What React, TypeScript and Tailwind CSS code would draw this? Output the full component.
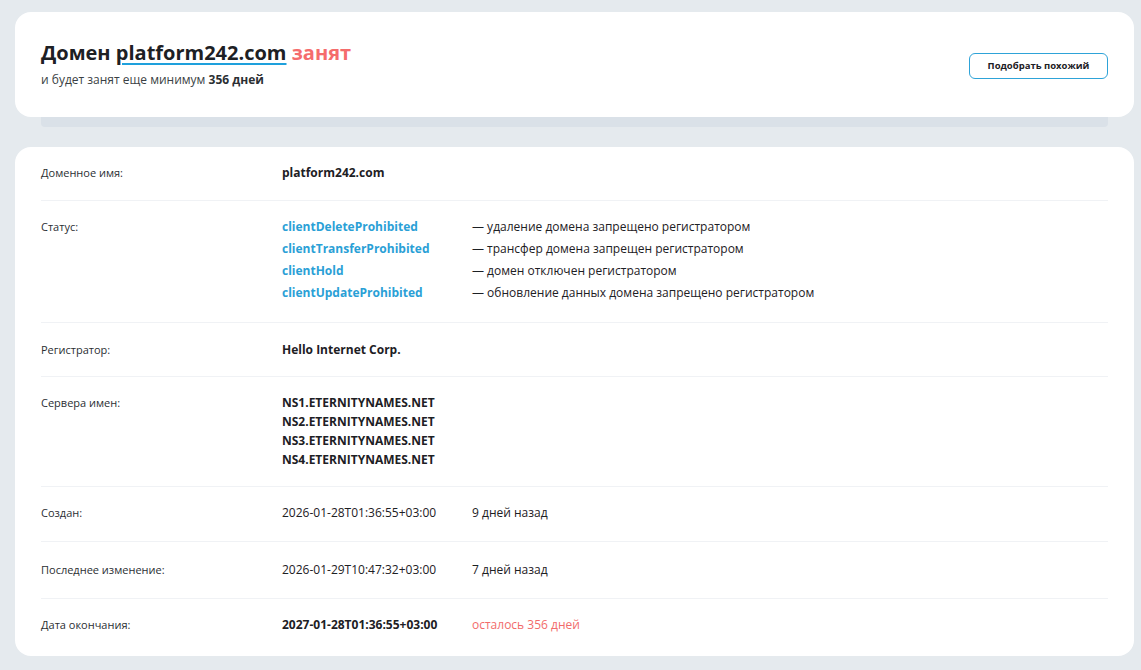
import type { ReactNode } from 'react'

const statuses = [
  { code: 'clientDeleteProhibited', text: '— удаление домена запрещено регистратором' },
  { code: 'clientTransferProhibited', text: '— трансфер домена запрещен регистратором' },
  { code: 'clientHold', text: '— домен отключен регистратором' },
  { code: 'clientUpdateProhibited', text: '— обновление данных домена запрещено регистратором' },
]

const nameservers = [
  'NS1.ETERNITYNAMES.NET',
  'NS2.ETERNITYNAMES.NET',
  'NS3.ETERNITYNAMES.NET',
  'NS4.ETERNITYNAMES.NET',
]

// One line of the whois table: label on the left, value block on the right
const Row = ({
  label,
  children,
  pad = 'pt-4 pb-[17px]',
  last,
}: {
  label: string
  children: ReactNode
  pad?: string
  last?: boolean
}) => (
  <div className={`flex ${pad} ${last ? '' : 'border-b border-[#f0f2f5]'}`}>
    <div className="w-[241px] shrink-0 text-[11px] leading-5 text-[#2b2f33]">{label}</div>
    <div className="flex-1 text-[12px] leading-5 text-[#1d2024]">{children}</div>
  </div>
)

const DateValue = ({ date, note, bold, warn }: { date: string; note: string; bold?: boolean; warn?: boolean }) => (
  <div className="flex">
    <span className={`w-[190px] ${bold ? 'font-bold' : ''}`}>{date}</span>
    <span className={warn ? 'text-[#f26b6b]' : ''}>{note}</span>
  </div>
)

export default function App() {
  return (
    <div
      className="min-h-screen bg-[#e5eaee] pt-3 pb-3 pl-[15px] pr-[7px]"
      style={{ fontFamily: '"Open Sans", "Noto Sans", sans-serif' }}
    >
      {/* Header card */}
      <div className="relative">
        <div className="relative z-10 flex h-[105px] items-center justify-between rounded-2xl bg-white px-[26px]">
          <div className="-mt-[1px]">
            <h1 className="text-[20px] font-bold leading-[26px] text-[#1d2024]">
              Домен{' '}
              <span className="underline decoration-[#1ea0dc] decoration-2 underline-offset-[3px]">platform242.com</span>{' '}
              <span className="text-[#f56c6c]">занят</span>
            </h1>
            <p className="mt-[6px] text-[12px] leading-4 text-[#3a3f44]">
              и будет занят еще минимум <b className="font-bold text-[#2b2f33]">356 дней</b>
            </p>
          </div>
          <button className="mt-[3px] h-[26px] w-[139px] rounded-md border border-[#2ea3d8] bg-white text-[9.5px] font-bold text-[#1d2024]">
            Подобрать похожий
          </button>
        </div>
        <div className="mx-[26px] -mt-2 h-[18px] rounded-b bg-[#dae1e8]" />
      </div>

      {/* Whois details */}
      <div className="mt-5 rounded-2xl bg-white px-[26px]">
        <Row label="Доменное имя:">
          <span className="font-bold">platform242.com</span>
        </Row>
        <Row label="Статус:" pad="pt-4 pb-[19px]">
          <div className="-my-px">
            {statuses.map((s) => (
              <div key={s.code} className="flex leading-[22px]">
                <span className="w-[190px] font-bold text-[#2aa0d6]">{s.code}</span>
                <span>{s.text}</span>
              </div>
            ))}
          </div>
        </Row>
        <Row label="Регистратор:" pad="pt-[17px] pb-4">
          <span className="font-bold">Hello Internet Corp.</span>
        </Row>
        <Row label="Сервера имен:">
          {nameservers.map((ns) => (
            <div key={ns} className="font-bold leading-[19px]">
              {ns}
            </div>
          ))}
        </Row>
        <Row label="Создан:" pad="pt-4 pb-[18px]">
          <DateValue date="2026-01-28T01:36:55+03:00" note="9 дней назад" />
        </Row>
        <Row label="Последнее изменение:" pad="pt-[18px] pb-[18px]">
          <DateValue date="2026-01-29T10:47:32+03:00" note="7 дней назад" />
        </Row>
        <Row label="Дата окончания:" pad="pt-4 pb-[21px]" last>
          <DateValue date="2027-01-28T01:36:55+03:00" note="осталось 356 дней" bold warn />
        </Row>
      </div>
    </div>
  )
}
